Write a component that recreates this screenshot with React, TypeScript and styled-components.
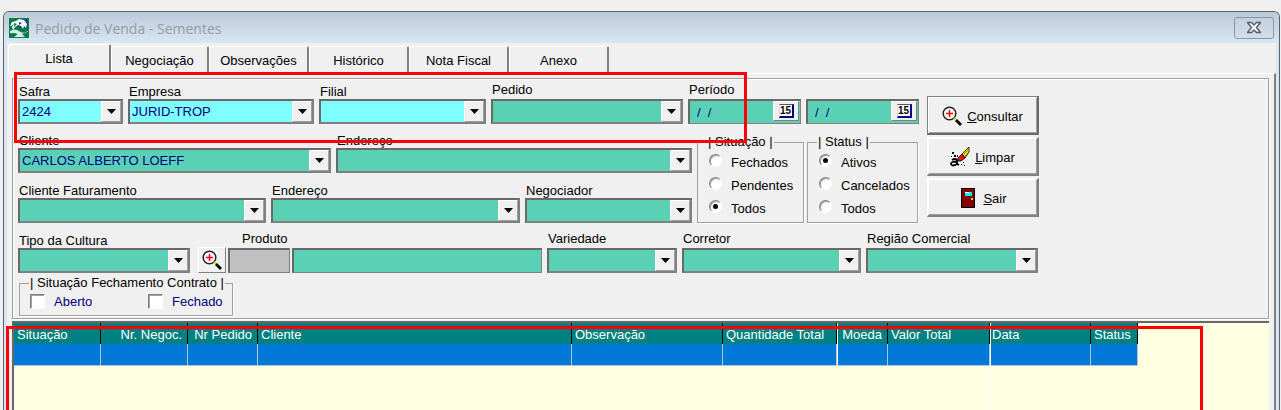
import React, { useId, useState } from "react";
import styled, { createGlobalStyle, css } from "styled-components";

const color = {
  face: "#f0f0f0",
  frame: "#d7e4f2",
  line: "#a0a0a0",
  shade: "#696969",
  mid: "#808080",
  teal: "#5ad1b5",
  cyan: "#80ffff",
  navy: "#000080",
  header: "#008080",
  selected: "#0078d7",
  paper: "#ffffe1",
  mark: "#ff0000",
};

const GlobalStyle = createGlobalStyle`
  *, *::before, *::after { box-sizing: border-box; }
  body {
    margin: 0;
    background: ${color.face};
    font-family: "Liberation Sans", Arial, sans-serif;
    font-size: 13px;
    color: #000;
  }
  button, input, select { font: inherit; color: inherit; }
`;

const Desktop = styled.div`
  position: relative;
  display: flex;
  min-height: 100vh;
  padding: 11px 1px 0 3px;
  overflow: hidden;
`;

const WindowFrame = styled.main`
  flex: 1;
  display: flex;
  flex-direction: column;
  padding: 0 3px;
  border: 1px solid #5c6166;
  border-bottom: 0;
  border-radius: 6px 6px 0 0;
  background: ${color.frame};
`;

const TitleBar = styled.header`
  display: flex;
  align-items: center;
  gap: 6px;
  height: 31px;
  margin: 0 -3px;
  padding: 0 5px;
  border-radius: 5px 5px 0 0;
  background: linear-gradient(#bac9d8, #d9e6f4);
`;

const Title = styled.h1`
  flex: 1;
  margin: 0;
  padding-top: 2px;
  font: 400 14px/20px "Open Sans", "Segoe UI", sans-serif;
  color: #979ca3;
`;

const CloseButton = styled.button`
  display: flex;
  align-items: center;
  justify-content: center;
  width: 40px;
  height: 22px;
  padding: 0;
  border: 1px solid #8696b0;
  border-radius: 3px;
  background: linear-gradient(#c2cfdd, #d2deea);
`;

const Client = styled.div`
  flex: 1;
  display: flex;
  flex-direction: column;
  background: ${color.face};
`;

const TabBar = styled.div`
  display: flex;
  align-items: flex-end;
  height: 30px;
  padding-left: 1px;
`;

const Tab = styled.button<{ $width: number; $active?: boolean }>`
  width: ${(p) => p.$width}px;
  height: ${(p) => (p.$active ? 29 : 27)}px;
  padding: 0 0 ${(p) => (p.$active ? 2 : 0)}px;
  border: solid;
  border-width: 1px 2px 0 1px;
  border-color: #fff ${color.mid} #fff #fff;
  border-radius: 3px 2px 0 0;
  background: ${color.face};
`;

const TabPage = styled.section`
  flex: 1;
  display: flex;
  flex-direction: column;
  padding: 4px 5px 0;
  border-top: 1px solid #fff;
  border-right: 2px solid ${color.mid};
`;

const FilterPanel = styled.form`
  padding: 4px 5px 2px;
  border: 1px solid ${color.line};
  box-shadow: inset 1px 1px #fff, 1px 1px #fff;
`;

const Upper = styled.div`
  display: flex;
  gap: 8px;
`;

const Stack = styled.div`
  display: flex;
  flex-direction: column;
  gap: 10px;
`;

const Row = styled.div`
  display: flex;
  align-items: flex-end;
  gap: 5px;
`;

const LowerRow = styled(Row)`
  margin-top: 9px;
`;

const FieldBox = styled.div<{ $width: number }>`
  display: flex;
  flex-direction: column;
  width: ${(p) => p.$width}px;
`;

const Caption = styled.label<{ $lifted?: boolean; $indent?: boolean }>`
  padding: 0 0 ${(p) => (p.$lifted ? 2 : 0)}px ${(p) => (p.$indent ? 14 : 1)}px;
  line-height: 14px;
  white-space: nowrap;
`;

const sunken = css`
  height: 25px;
  border: 2px solid ${color.mid};
  border-color: ${color.shade} ${color.mid} ${color.mid} ${color.shade};
  border-width: 2px 1px 1px 2px;
`;

const ComboBox = styled.div<{ $tint?: string }>`
  ${sunken}
  position: relative;
  border-width: 2px;
  background: ${(p) => p.$tint ?? color.teal};
`;

const ComboSelect = styled.select`
  appearance: none;
  display: block;
  width: 100%;
  height: 100%;
  padding: 0 20px 0 2px;
  border: 0;
  background: transparent;
  color: ${color.navy};
`;

const ComboArrow = styled.span`
  position: absolute;
  top: 0;
  right: 0;
  bottom: 0;
  display: flex;
  align-items: center;
  justify-content: center;
  width: 20px;
  border: 1px solid;
  border-color: #fff ${color.line} ${color.line} #fff;
  background: ${color.face};
  pointer-events: none;
`;

const DateBox = styled.div`
  ${sunken}
  display: flex;
  background: ${color.teal};
`;

const DateInput = styled.input`
  flex: 1;
  min-width: 0;
  padding: 0 0 0 7px;
  border: 0;
  background: transparent;
  color: ${color.navy};
`;

const DateButton = styled.button`
  display: flex;
  align-items: center;
  justify-content: center;
  width: 26px;
  height: 20px;
  margin-right: 1px;
  padding: 0;
  border: 1px solid;
  border-color: #fff ${color.mid} ${color.mid} #fff;
  background: ${color.face};
`;

const DateFace = styled.span`
  width: 15px;
  height: 14px;
  border: solid ${color.navy};
  border-width: 1px 2px 2px 1px;
  border-top-color: #555;
  border-left-color: #ddd;
  background: #fff;
  font-size: 10px;
  font-weight: 700;
  line-height: 11px;
`;

const TextBox = styled.input<{ $width: number; $grey?: boolean }>`
  ${sunken}
  width: ${(p) => p.$width}px;
  padding: 0 2px;
  background: ${(p) => (p.$grey ? "#c0c0c0" : color.teal)};
`;

const ProductLookup = styled.div`
  display: flex;
  align-items: flex-end;
  gap: 2px;
  padding-left: 3px;
`;

const ProductField = styled.div`
  display: flex;
  flex-direction: column;
`;

const ProductInputs = styled.div`
  display: flex;
  gap: 2px;
`;

const LookupButton = styled.button`
  display: flex;
  align-items: center;
  justify-content: center;
  width: 28px;
  height: 26px;
  padding: 0;
  border: 1px solid;
  border-color: #fff ${color.mid} ${color.mid} #fff;
  background: ${color.face};
`;

const Middle = styled.div`
  display: flex;
  align-items: flex-end;
  gap: 5px;
`;

const AddressRows = styled(Stack)`
  gap: 11px;
`;

const Groups = styled.div`
  display: flex;
  gap: 3px;
`;

const Group = styled.fieldset<{ $width: number }>`
  width: ${(p) => p.$width}px;
  min-width: 0;
  margin: 0;
  padding: 2px 0 2px 9px;
  border: 1px solid ${color.line};
  box-shadow: 1px 1px #fff;
`;

const Legend = styled.legend`
  padding: 0 1px;
  line-height: 14px;
  white-space: nowrap;
`;

const Choice = styled.label`
  display: flex;
  align-items: center;
  gap: 9px;
  height: 23px;
`;

const Radio = styled.input.attrs({ type: "radio" })`
  appearance: none;
  display: grid;
  place-items: center;
  width: 13px;
  height: 13px;
  margin: 0 0 4px 2px;
  border: 1px solid;
  border-color: ${color.mid} #fff #fff ${color.mid};
  border-radius: 50%;
  background: #fff;
  box-shadow: inset 1px 1px ${color.line};
  &:checked::before {
    content: "";
    width: 5px;
    height: 5px;
    border-radius: 50%;
    background: #000;
  }
`;

const ClosingGroup = styled(Group)`
  margin: 3px 0 0 1px;
  padding: 0 0 2px 9px;
`;

const CheckRow = styled.div`
  display: flex;
`;

const CheckChoice = styled(Choice)`
  width: 118px;
  flex-shrink: 0;
  color: ${color.navy};
`;

const Checkbox = styled.input.attrs({ type: "checkbox" })`
  appearance: none;
  width: 15px;
  height: 15px;
  margin: 0 0 0 1px;
  border: 1px solid;
  border-color: ${color.mid} #fff #fff ${color.mid};
  background: #fff;
  box-shadow: inset 1px 1px ${color.line};
  &:checked { background: ${color.navy}; }
`;

const Actions = styled.div`
  display: flex;
  flex-direction: column;
  gap: 2px;
  padding-top: 13px;
`;

const ActionButton = styled.button<{ $primary?: boolean }>`
  display: flex;
  align-items: center;
  justify-content: center;
  gap: 5px;
  width: 112px;
  height: 39px;
  padding: 2px 0 0;
  border: solid;
  border-width: 1px 2px 2px 1px;
  border-color: ${(p) => (p.$primary ? `${color.mid} ${color.shade} ${color.shade} ${color.mid}` : `#fff ${color.mid} ${color.mid} #fff`)};
  background: ${color.face};
  box-shadow: inset 1px 1px #fff, inset -1px -1px ${color.line};
`;

const Results = styled.div`
  flex: 1;
  min-height: 89px;
  margin-top: 2px;
  border: solid ${color.shade};
  border-width: 2px 0 0 2px;
  background:
    linear-gradient(#fff, #fff) 823px 0 / 1px 100% no-repeat,
    linear-gradient(#fff, #fff) 976px 0 / 1px 100% no-repeat,
    ${color.paper};
`;

const Grid = styled.table`
  table-layout: fixed;
  width: 1124px;
  border-collapse: separate;
  border-spacing: 0;
`;

const HeadCell = styled.th<{ $width: number; $right?: boolean; $split?: boolean }>`
  width: ${(p) => p.$width}px;
  height: 21px;
  padding: 2px 5px 0 ${(p) => (p.$split ? 1 : 3)}px;
  border: solid #fff;
  border-width: 0 1px 0 ${(p) => (p.$split ? 1 : 0)}px;
  border-right-color: #000;
  background: ${color.header};
  color: #fff;
  font-weight: 400;
  line-height: 19px;
  text-align: ${(p) => (p.$right ? "right" : "left")};
  white-space: nowrap;
`;

const BodyCell = styled.td<{ $split?: boolean }>`
  height: 22px;
  padding: 0;
  border: solid #b4c6d6;
  border-width: 0 1px 1px ${(p) => (p.$split ? 1 : 0)}px;
  border-left-color: #fff;
  background: ${color.selected};
`;

const Mark = styled.div`
  position: absolute;
  border: 3px solid ${color.mark};
  pointer-events: none;
`;

const FilterMark = styled(Mark)`
  top: 72px;
  left: 14px;
  width: 733px;
  height: 71px;
`;

const ResultsMark = styled(Mark)`
  top: 326px;
  bottom: -4px;
  left: 6px;
  width: 1197px;
`;

const AppIcon = () => (
  <svg width="20" height="20" viewBox="0 0 20 20" aria-hidden="true">
    <path fill="#087a45" d="M0 0h20v20H0z" />
    <path fill="#17488c" d="M9 1h10v8l-5 2-5-2z" />
    <path fill="#fff" d="M1 8 3 4l4-1 3-2 5 1 3 4-1 4-2-2-1 3-2-3-3-1-3 2-2 3-1-3 2-3-3 2z" />
    <path fill="#10884b" d="m5 5 3 1-3 3z" />
    <path fill="#17488c" d="m10 4 3 1-3 2z" />
    <path fill="#d8efe4" d="M1 13q5-3 9 0t9 0v2l-6 1 3 3H5l4-3-8-1z" />
    <path fill="#087a45" d="m1 16 6-1-3 4H1zM12 15l7-1v2z" />
  </svg>
);

const CloseIcon = () => (
  <svg width="16" height="13" viewBox="0 0 16 13" aria-hidden="true">
    <path
      d="M1.500 1.500h4L8 4l2.500-2.500h4L10.500 6.500l4 5h-4L8 9l-2.500 2.500h-4l4-5z"
      fill="#f4f6f9"
      stroke="#545c6e"
      strokeWidth="1.400"
      strokeLinejoin="round"
    />
  </svg>
);

const SearchIcon = () => (
  <svg width="20" height="20" viewBox="0 0 20 20" aria-hidden="true">
    <circle cx="7.500" cy="7.500" r="6.300" fill="#fff" stroke="#222" strokeWidth="1.500" />
    <path d="M7.500 4v7M4 7.500h7" stroke="#f00" strokeWidth="1.500" />
    <path d="m12 12 2 2" stroke="#e8d800" strokeWidth="2.200" />
    <path d="m14 14 5 5" stroke="#000" strokeWidth="2.800" />
  </svg>
);

const EraserIcon = () => (
  <svg width="20" height="20" viewBox="0 0 20 20" aria-hidden="true">
    <path fill="#f5e000" stroke="#000" strokeWidth=".8" d="m12 7 7-7v5l-4 6z" />
    <path d="m14 7 4-4M15 9l4-4" stroke="#806000" strokeWidth=".7" />
    <path fill="#f01010" stroke="#000" strokeWidth=".8" d="m8 11 4-4 3 4-4 3-3 0z" />
    <path fill="none" stroke="#000" strokeWidth="1.800" d="M2 13q3-2 5 0v5M7 15q-6-1-6 2 1 3 6 0l2 1" />
    <path fill="#000" d="M2 5h2v2H2zM4 8h2v2H4zM1 9h1v1H1zM7 8h1v2H7zM11 17h1v1h-1zM14 18h1v1h-1zM13 15h1v1h-1z" />
  </svg>
);

const DoorIcon = () => (
  <svg width="20" height="20" viewBox="-3 0 20 20" aria-hidden="true" shapeRendering="crispEdges">
    <path fill="#000" d="M0 0h14v20H0z" />
    <path fill="#800000" d="M1 1h12v18H1z" />
    <path fill="#00f0f0" d="M4 4h7v4H4z" />
    <path fill="#fff" d="M4 4h4v1H4z" />
    <path fill="#f0d000" d="M10 10h2v2h-2z" />
  </svg>
);

const ArrowIcon = () => (
  <svg width="9" height="5" viewBox="0 0 9 5" aria-hidden="true">
    <path d="M0 0h9L4.500 5z" />
  </svg>
);

type ComboProps = {
  label: string;
  width: number;
  value?: string;
  tint?: string;
  lifted?: boolean;
};

function Combo({ label, width, value = "", tint, lifted }: ComboProps) {
  const id = useId();
  return (
    <FieldBox $width={width}>
      <Caption htmlFor={id} $lifted={lifted}>{label}</Caption>
      <ComboBox $tint={tint}>
        <ComboSelect id={id} defaultValue={value}>
          <option value={value}>{value}</option>
        </ComboSelect>
        <ComboArrow><ArrowIcon /></ComboArrow>
      </ComboBox>
    </FieldBox>
  );
}

function DateField({ label, name }: { label?: string; name: string }) {
  const id = useId();
  return (
    <FieldBox $width={113}>
      {label && <Caption htmlFor={id} $lifted>{label}</Caption>}
      <DateBox>
        <DateInput id={id} defaultValue="/  /" aria-label={name} />
        <DateButton type="button" aria-label={`Calendário: ${name}`}>
          <DateFace>15</DateFace>
        </DateButton>
      </DateBox>
    </FieldBox>
  );
}

type RadioGroupProps = { title: string; width: number; options: string[]; initial: string };

function RadioGroup({ title, width, options, initial }: RadioGroupProps) {
  const [value, setValue] = useState(initial);
  return (
    <Group $width={width}>
      <Legend>| {title} |</Legend>
      {options.map((option) => (
        <Choice key={option}>
          <Radio name={title} checked={value === option} onChange={() => setValue(option)} />
          {option}
        </Choice>
      ))}
    </Group>
  );
}

const tabs = [
  { label: "Lista", width: 103 },
  { label: "Negociação", width: 98 },
  { label: "Observações", width: 100 },
  { label: "Histórico", width: 100 },
  { label: "Nota Fiscal", width: 100 },
  { label: "Anexo", width: 100 },
];

const columns = [
  { label: "Situação", width: 87 },
  { label: "Nr. Negoc.", width: 87, right: true },
  { label: "Nr Pedido", width: 70, right: true },
  { label: "Cliente", width: 314 },
  { label: "Observação", width: 151 },
  { label: "Quantidade Total", width: 114 },
  { label: "Moeda", width: 51, right: true, split: true },
  { label: "Valor Total", width: 102 },
  { label: "Data", width: 101, split: true },
  { label: "Status", width: 47 },
];

export default function App() {
  const [tab, setTab] = useState("Lista");
  const productId = useId();
  return (
    <>
      <GlobalStyle />
      <Desktop>
        <WindowFrame>
          <TitleBar>
            <AppIcon />
            <Title>Pedido de Venda - Sementes</Title>
            <CloseButton type="button" aria-label="Fechar janela"><CloseIcon /></CloseButton>
          </TitleBar>
          <Client>
            <TabBar role="tablist">
              {tabs.map((t) => (
                <Tab
                  key={t.label}
                  type="button"
                  role="tab"
                  aria-selected={tab === t.label}
                  $width={t.width}
                  $active={tab === t.label}
                  onClick={() => setTab(t.label)}
                >
                  {t.label}
                </Tab>
              ))}
            </TabBar>
            <TabPage>
              <FilterPanel onSubmit={(e) => e.preventDefault()}>
                <Upper>
                  <Stack>
                    <Row>
                      <Combo label="Safra" width={105} value="2424" tint={color.cyan} />
                      <Combo label="Empresa" width={186} value="JURID-TROP" tint={color.cyan} />
                      <Combo label="Filial" width={167} tint={color.cyan} />
                      <Combo label="Pedido" width={192} lifted />
                      <DateField label="Período" name="Período inicial" />
                      <DateField name="Período final" />
                    </Row>
                    <Middle>
                      <AddressRows>
                        <Row>
                          <Combo label="Cliente" width={313} value="CARLOS ALBERTO LOEFF" />
                          <Combo label="Endereço" width={356} />
                        </Row>
                        <Row>
                          <Combo label="Cliente Faturamento" width={248} />
                          <Combo label="Endereço" width={249} />
                          <Combo label="Negociador" width={167} />
                        </Row>
                      </AddressRows>
                      <Groups>
                        <RadioGroup title="Situação" width={107} options={["Fechados", "Pendentes", "Todos"]} initial="Todos" />
                        <RadioGroup title="Status" width={111} options={["Ativos", "Cancelados", "Todos"]} initial="Ativos" />
                      </Groups>
                    </Middle>
                  </Stack>
                  <Actions>
                    <ActionButton type="submit" $primary><SearchIcon /><span><u>C</u>onsultar</span></ActionButton>
                    <ActionButton type="reset"><EraserIcon /><span><u>L</u>impar</span></ActionButton>
                    <ActionButton type="button"><DoorIcon /><span><u>S</u>air</span></ActionButton>
                  </Actions>
                </Upper>
                <LowerRow>
                  <Combo label="Tipo da Cultura" width={172} />
                  <ProductLookup>
                    <LookupButton type="button" aria-label="Pesquisar produto"><SearchIcon /></LookupButton>
                    <ProductField>
                      <Caption htmlFor={productId} $lifted $indent>Produto</Caption>
                      <ProductInputs>
                        <TextBox $width={62} $grey readOnly aria-label="Código do produto" />
                        <TextBox id={productId} $width={250} />
                      </ProductInputs>
                    </ProductField>
                  </ProductLookup>
                  <Combo label="Variedade" width={130} lifted />
                  <Combo label="Corretor" width={179} lifted />
                  <Combo label="Região Comercial" width={172} lifted />
                </LowerRow>
                <ClosingGroup $width={214}>
                  <Legend>| Situação Fechamento Contrato |</Legend>
                  <CheckRow>
                    <CheckChoice><Checkbox />Aberto</CheckChoice>
                    <CheckChoice><Checkbox />Fechado</CheckChoice>
                  </CheckRow>
                </ClosingGroup>
              </FilterPanel>
              <Results>
                <Grid>
                  <thead>
                    <tr>
                      {columns.map((c) => (
                        <HeadCell key={c.label} scope="col" $width={c.width} $right={c.right} $split={c.split}>{c.label}</HeadCell>
                      ))}
                    </tr>
                  </thead>
                  <tbody>
                    <tr>
                      {columns.map((c) => <BodyCell key={c.label} $split={c.split} />)}
                    </tr>
                  </tbody>
                </Grid>
              </Results>
            </TabPage>
          </Client>
        </WindowFrame>
        <FilterMark />
        <ResultsMark />
      </Desktop>
    </>
  );
}
